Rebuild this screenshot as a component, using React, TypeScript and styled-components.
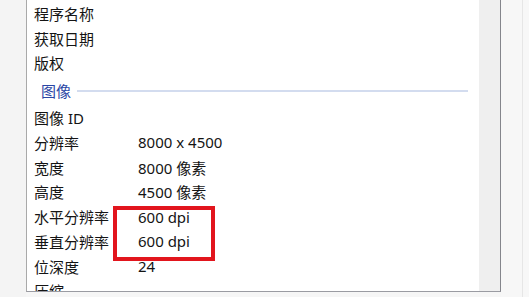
import styled, { createGlobalStyle } from "styled-components";

const GlobalStyle = createGlobalStyle`
  html, body {
    margin: 0;
    padding: 0;
    background: #f6f6f6;
    font-family: "Noto Sans", "Noto Sans CJK SC", sans-serif;
  }
`;

interface Prop {
  label: string;
  value?: string;
}

const topRows: Prop[] = [{ label: "程序名称" }, { label: "获取日期" }, { label: "版权" }];

const imageRows: Prop[] = [
  { label: "图像 ID" },
  { label: "分辨率", value: "8000 x 4500" },
  { label: "宽度", value: "8000 像素" },
  { label: "高度", value: "4500 像素" },
  { label: "水平分辨率", value: "600 dpi" },
  { label: "垂直分辨率", value: "600 dpi" },
  { label: "位深度", value: "24" },
  { label: "压缩" },
];

export default function App() {
  return (
    <>
      <GlobalStyle />
      <Window>
        <LeftStrip />
        <Panel>
          <Content>
            {topRows.map((r) => (
              <Row key={r.label}>
                <Label>{r.label}</Label>
                <Value>{r.value}</Value>
              </Row>
            ))}
            <SectionHeader>
              <SectionTitle>图像</SectionTitle>
              <SectionLine />
            </SectionHeader>
            {imageRows.map((r) => (
              <Row key={r.label}>
                <Label>{r.label}</Label>
                <Value>{r.value}</Value>
              </Row>
            ))}
            <Highlight />
          </Content>
          <Scrollbar />
        </Panel>
        <RightGutter>
          <GutterLine />
        </RightGutter>
      </Window>
    </>
  );
}

const Window = styled.div`
  display: flex;
  width: 529px;
  height: 297px;
  overflow: hidden;
`;

const LeftStrip = styled.div`
  width: 26px;
  flex-shrink: 0;
  background: #f4f4f4;
`;

const Panel = styled.div`
  display: flex;
  width: 475px;
  height: 292px;
  box-sizing: border-box;
  flex-shrink: 0;
  background: #fff;
  border-left: 1px solid #a9a9a9;
  border-right: 1px solid #85868c;
  border-bottom: 1px solid #9a9ba2;
`;

const Content = styled.div`
  position: relative;
  flex: 1;
  overflow: hidden;
  padding: 1px 0 0 7px;
`;

const Row = styled.div`
  display: flex;
  align-items: center;
  height: 24.75px;
  font-size: 15px;
  color: #141414;
  white-space: nowrap;
`;

const Label = styled.span`
  width: 104px;
  flex-shrink: 0;
`;

const Value = styled.span``;

const SectionHeader = styled.div`
  display: flex;
  align-items: center;
  gap: 6px;
  height: 30px;
  padding-left: 7px;
  margin-right: 11px;
`;

const SectionTitle = styled.span`
  font-size: 15px;
  color: #2a46a5;
`;

const SectionLine = styled.div`
  flex: 1;
  height: 2px;
  margin-top: 1px;
  background: #d3dcef;
`;

const Highlight = styled.div`
  position: absolute;
  left: 86px;
  top: 206px;
  width: 102px;
  height: 55px;
  box-sizing: border-box;
  border: 4px solid #e2151d;
`;

const Scrollbar = styled.div`
  width: 21px;
  flex-shrink: 0;
  background: #efefef;
`;

const RightGutter = styled.div`
  display: flex;
  justify-content: flex-end;
  flex: 1;
  background: #f7f7f7;
`;

const GutterLine = styled.div`
  width: 1px;
  height: 100%;
  margin-right: 6px;
  background: #e6e6e6;
`;
